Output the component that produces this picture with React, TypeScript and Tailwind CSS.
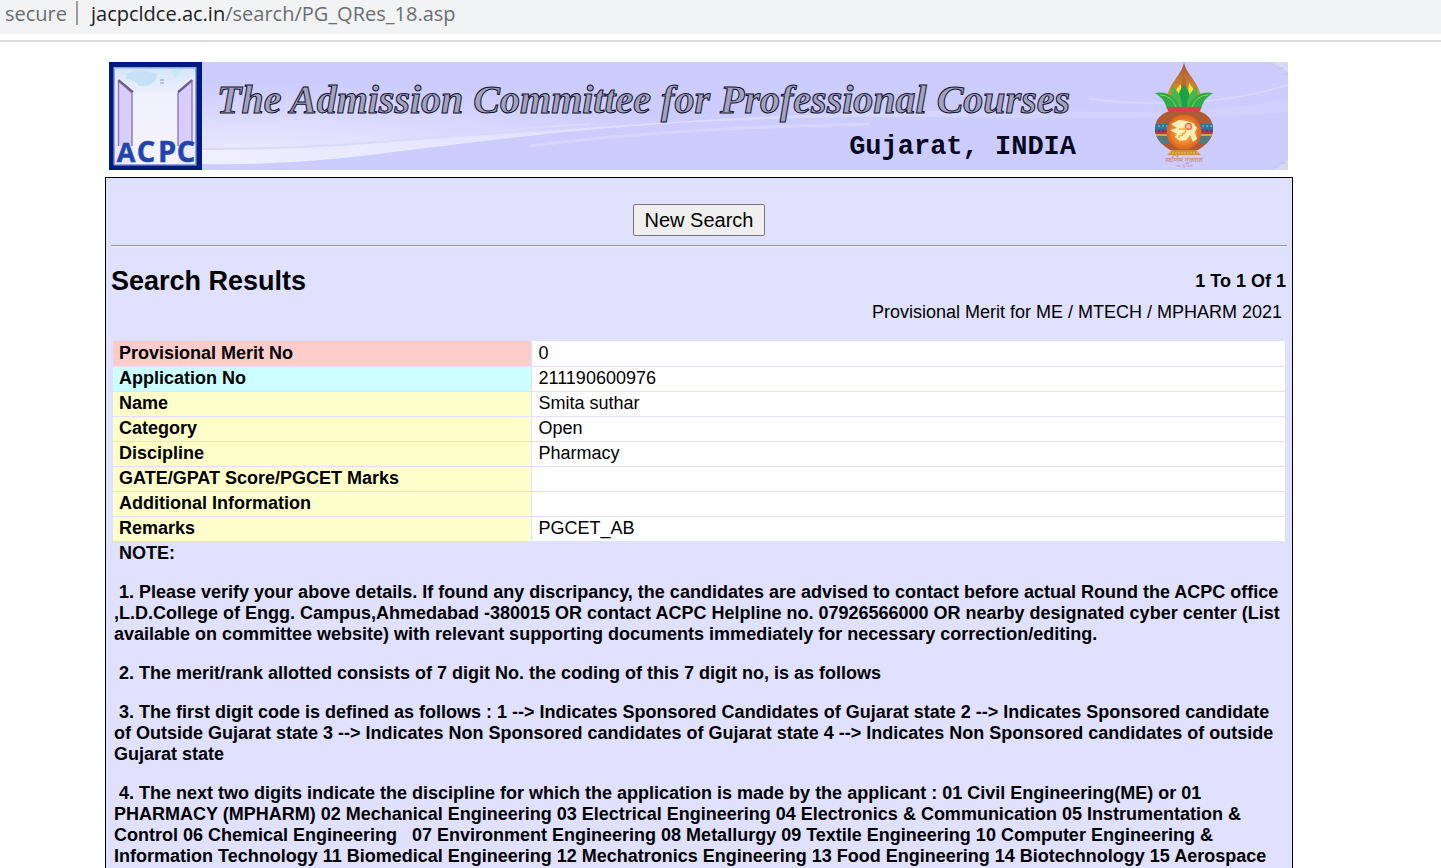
import React from "react";

type Row = { label: string; value: string; tone: string };

const rows: Row[] = [
  { label: "Provisional Merit No", value: "0", tone: "bg-[#ffcccc]" },
  { label: "Application No", value: "211190600976", tone: "bg-[#ccffff]" },
  { label: "Name", value: "Smita suthar", tone: "bg-[#ffffcc]" },
  { label: "Category", value: "Open", tone: "bg-[#ffffcc]" },
  { label: "Discipline", value: "Pharmacy", tone: "bg-[#ffffcc]" },
  { label: "GATE/GPAT Score/PGCET Marks", value: "", tone: "bg-[#ffffcc]" },
  { label: "Additional Information", value: "", tone: "bg-[#ffffcc]" },
  { label: "Remarks", value: "PGCET_AB", tone: "bg-[#ffffcc]" },
];

const notes: string[] = [
  "NOTE:",
  "1. Please verify your above details. If found any discripancy, the candidates are advised to contact before actual Round the ACPC office ,L.D.College of Engg. Campus,Ahmedabad -380015 OR contact ACPC Helpline no. 07926566000 OR nearby designated cyber center (List available on committee website) with relevant supporting documents immediately for necessary correction/editing.",
  "2. The merit/rank allotted consists of 7 digit No. the coding of this 7 digit no, is as follows",
  "3. The first digit code is defined as follows : 1 --> Indicates Sponsored Candidates of Gujarat state 2 --> Indicates Sponsored candidate of Outside Gujarat state 3 --> Indicates Non Sponsored candidates of Gujarat state 4 --> Indicates Non Sponsored candidates of outside Gujarat state",
  "4. The next two digits indicate the discipline for which the application is made by the applicant : 01 Civil Engineering(ME) or 01 PHARMACY (MPHARM) 02 Mechanical Engineering 03 Electrical Engineering 04 Electronics & Communication 05 Instrumentation & Control 06 Chemical Engineering\u00a0\u00a0 07 Environment Engineering 08 Metallurgy 09 Textile Engineering 10 Computer Engineering & Information Technology 11 Biomedical Engineering 12 Mechatronics Engineering 13 Food Engineering 14 Biotechnology 15 Aerospace",
];

function AddressBar() {
  return (
    <div className="border-b-2 border-[#dadce0] bg-white pb-[6px]">
      <div className="flex h-[34px] items-start bg-[#f1f3f4] pl-[5px] font-['Open_Sans','Noto_Sans',sans-serif] text-[20px] leading-[28px] text-[#6b6e72]">
        <span>secure</span>
        <span className="ml-[9px] mr-[13px] mt-px h-6 w-[2px] bg-[#9a9da1]" />
        <span>
          <span className="text-[#202124]">jacpcldce.ac.in</span>/search/PG_QRes_18.asp
        </span>
      </div>
    </div>
  );
}

function DoorLogo() {
  return (
    <svg viewBox="0 0 93 108" className="h-[108px] w-[93px] shrink-0" role="img" aria-label="ACPC">
      <defs>
        <linearGradient id="sky" x1="0" y1="0" x2="0" y2="1">
          <stop offset="0" stopColor="#d5e6fb" />
          <stop offset="0.3" stopColor="#f1f0fd" />
          <stop offset="1" stopColor="#f5f3ff" />
        </linearGradient>
      </defs>
      <rect width="93" height="108" fill="#001c80" />
      <rect x="4.500" y="5" width="83" height="98.500" fill="#8fa5e8" />
      <rect x="6" y="6.500" width="80" height="95.500" fill="url(#sky)" />
      <path d="M17 12 Q28 6 48 12 Q48 20 38 24 L30 24 Q27 18 17 17Z" fill="#c6e0f5" />
      <path d="M62 7 L75 7 L66 16Z" fill="#c7e9f4" />
      <path d="M6 12 L24 29 V102 H6Z M86 12 L69 29 V102 H86Z" fill="#eee8ff" />
      <path d="M9.500 18 L23 30 V84 H9.500Z" fill="#d8cdfb" />
      <path d="M83 18 L69 30 V84 H83Z" fill="#d8cdfb" />
      <path d="M9.500 84 V19 L23 31 V84 M83 84 V19 L69 31 V84" fill="none" stroke="#8372b4" strokeWidth="1.300" />
      <path d="M9.500 18 L24 30 M83 18 L69 30" fill="none" stroke="#685d88" strokeWidth="2" />
      <path d="M51 18 h4 M51 21 h4" stroke="#8a94bd" strokeWidth="1" />
      <g
        fontFamily="Open Sans, sans-serif"
        fontSize="29"
        fontWeight="700"
        fill="#2145ad"
        stroke="#2145ad"
        strokeWidth="0.500"
        textAnchor="middle"
      >
        <text x="17" y="100" fontSize="27">A</text>
        <text x="37" y="100">C</text>
        <text x="58" y="100">P</text>
        <text x="77" y="100">C</text>
      </g>
    </svg>
  );
}

function KalashEmblem() {
  return (
    <svg viewBox="0 0 64 108" className="h-[108px] w-[64px] shrink-0" aria-hidden="true">
      <defs>
        <linearGradient id="flame" x1="0" y1="0" x2="0" y2="1">
          <stop offset="0" stopColor="#a85532" />
          <stop offset="0.45" stopColor="#c58034" />
          <stop offset="1" stopColor="#eac628" />
        </linearGradient>
        <radialGradient id="disc">
          <stop offset="0.4" stopColor="#f3a23c" />
          <stop offset="1" stopColor="#df601b" />
        </radialGradient>
        <clipPath id="pot">
          <path d="M17 49 H47 Q61 54 61 67 Q61 79 46 88 H18 Q3 79 3 67 Q3 54 17 49Z" />
        </clipPath>
      </defs>
      <path d="M32 0 C34 13 49 21 49 38 Q48 45 43 49 H20 Q15 42 15 36 C16 22 30 13 32 0Z" fill="url(#flame)" />
      <path d="M29 22 Q20 30 21 41 L27 46 L29 33Z M37 21 Q46 31 43 42 L38 46 L36 33Z" fill="#ffe43b" />
      <path d="M32 14 Q27 26 31 34 Q37 26 32 14Z" fill="#b76830" />
      <path d="M32 23 Q42 34 36 47 H28 Q22 34 32 23Z" fill="#18a24a" />
      <path d="M20 24 Q31 32 30 47 H22 Q17 35 20 24Z M45 24 Q34 32 35 47 H42 Q47 35 45 24Z" fill="#4bb550" />
      <path d="M3 31 Q22 28 28 47 H15 Q13 37 3 31Z M61 31 Q42 28 36 47 H49 Q51 37 61 31Z" fill="#2fab49" />
      <path d="M8 33 Q20 33 25 47 M56 33 Q44 33 39 47" fill="none" stroke="#95cf46" strokeWidth="1" />
      <rect x="15.500" y="45" width="33" height="4" rx="1" fill="#df3b49" />
      <path d="M17 49 H47 Q61 54 61 67 Q61 79 46 88 H18 Q3 79 3 67 Q3 54 17 49Z" fill="#ad5b34" />
      <g clipPath="url(#pot)">
        <path d="M2 62 H62 V67 H2Z" fill="#2f7795" />
        <path d="M2 67 H62 V72 H2Z" fill="#b7334f" />
        <path d="M2 72 H62 V74 H2Z" fill="#d2a73e" />
        <path d="M2 74 H62 V82 H2Z" fill="#57777c" />
        <path d="M2 69 H62" stroke="#354b91" strokeWidth="2" strokeDasharray="2 2" />
        <path d="M2 64 H62" stroke="#6b97a7" strokeWidth="2" strokeDasharray="2 2" />
      </g>
      <circle cx="32" cy="70" r="17.500" fill="url(#disc)" />
      <path d="M19 62 L27 58 L34 59 L41 61 L45 66 L43 70 L45 77 L41 80 L38 73 L34 78 L28 79 L23 75 L25 72 L18 68 L25 66Z" fill="#fff0ba" />
      <circle cx="36.500" cy="64.500" r="3" fill="#ffc2a6" stroke="#ea754b" strokeWidth="1.500" />
      <path d="M27 67 h6 q2 4 -3 5 M31 73 q-5 0 -4 3" fill="none" stroke="#efb13c" strokeWidth="1.500" />
      <path d="M20 88 H44 L49 93 H15Z" fill="#cc9238" />
      <path d="M17 91 H47" stroke="#edc65b" strokeDasharray="2 1" />
      <g fill="#c5846f" fontFamily="Noto Sans, sans-serif" fontSize="7" textAnchor="middle">
        <text x="32" y="100">स्वर्णिम गुजरात</text>
        <text x="32" y="105" fontSize="4">સ્વ. ગુ. ૫૦</text>
      </g>
    </svg>
  );
}

function Banner() {
  return (
    <header className="relative ml-1 mr-[5px] flex h-[108px] overflow-hidden bg-[#ccccff]">
      <svg className="absolute inset-0 h-full w-full" viewBox="0 0 1179 108" preserveAspectRatio="none" aria-hidden="true">
        <defs>
          <linearGradient id="wave" x1="0" y1="0" x2="1" y2="0">
            <stop offset="0" stopColor="#efefff" />
            <stop offset="0.4" stopColor="#dedeff" />
            <stop offset="0.8" stopColor="#d2d2ff" />
            <stop offset="1" stopColor="#d0d0ff" />
          </linearGradient>
          <radialGradient id="glow" cx="0.1" cy="1" r="0.9">
            <stop offset="0" stopColor="#e8e8ff" />
            <stop offset="1" stopColor="#e8e8ff" stopOpacity="0" />
          </radialGradient>
        </defs>
        <path d="M93 14 H613 V60 C500 62 400 76 300 88 H93Z" fill="url(#glow)" />
        <path d="M93 86 C300 88 500 55 820 49 C950 47 1090 58 1179 36 V50 C1020 64 850 50 660 57 C500 62 400 76 300 88 Q190 104 93 102Z" fill="url(#wave)" />
        <path d="M93 87 C260 88 360 68 480 62" fill="none" stroke="#dadafa" strokeWidth="2" />
        <path d="M420 84 Q560 66 760 62" fill="none" stroke="#d6d6ff" strokeWidth="3" />
        <path d="M980 37 Q1090 50 1179 23" fill="none" stroke="#d6d6ff" strokeWidth="2" />
        <path d="M1162 0 L1179 10 V0Z M1164 108 L1179 98 V108Z" fill="#d7d9ee" />
        <path d="M1162 3 h4 M1170 6 h5 M1175 12 h3 M1165 105 h5 M1172 101 h5" stroke="#c3c5dd" strokeWidth="1" />
      </svg>
      <div className="relative flex w-full">
        <DoorLogo />
        <div className="ml-[15px] flex w-[859px] shrink-0 flex-col">
          <h1 className="h-[72px] whitespace-nowrap font-['Liberation_Serif',serif] text-[40px] font-bold italic leading-[76px] text-[#a3a3bd] [-webkit-text-stroke:1px_#10102a]">
            The Admission Committee for Professional Courses
          </h1>
          <p className="self-end font-['Liberation_Mono',monospace] text-[27px] font-bold leading-[26px] text-[#080820]">
            Gujarat, INDIA
          </p>
        </div>
        <div className="ml-auto mr-[72px]">
          <KalashEmblem />
        </div>
      </div>
    </header>
  );
}

export default function App() {
  return (
    <div className="h-screen overflow-hidden bg-white font-['Liberation_Sans',Arial,sans-serif] text-[18px] leading-[21px] text-black">
      <AddressBar />
      <div className="pl-[105px] pr-[148px] pt-5">
        <Banner />
        <main className="mt-[7px] border border-black bg-[#e0e0ff] px-[5px] pb-24 pt-[26px]">
          <div className="flex justify-center">
            <button
              type="button"
              className="h-8 rounded-[2px] border border-[#767676] bg-[#efefef] px-[11px] text-[20px] leading-[28px]"
            >
              New Search
            </button>
          </div>
          <hr className="mt-[9px] h-[2px] border-b border-t border-b-[#eeeeee] border-t-[#9a9a9a]" />
          <div className="mt-[18px] flex items-center justify-between pr-px font-bold">
            <h2 className="text-[27px] leading-[32px]">Search Results</h2>
            <p>1 To 1 Of 1</p>
          </div>
          <p className="mt-[5px] pr-[5px] text-right">Provisional Merit for ME / MTECH / MPHARM 2021</p>
          <div className="px-[2px] pt-[18px]">
            <table className="w-full border-collapse text-left">
              <tbody>
                {rows.map((row) => (
                  <tr key={row.label} className="h-[25px] border-b border-[#e0e0ff]">
                    <th scope="row" className={`w-[418px] border-r border-[#e0e0ff] py-0 pl-[6px] font-bold ${row.tone}`}>
                      {row.label}
                    </th>
                    <td className="bg-white py-0 pl-[7px]">{row.value}</td>
                  </tr>
                ))}
              </tbody>
            </table>
          </div>
          <section className="flex flex-col gap-[18px] px-[3px] pt-px font-bold">
            {notes.map((note) => (
              <p key={note}>
                {"\u00a0"}
                {note}
              </p>
            ))}
          </section>
        </main>
      </div>
    </div>
  );
}
